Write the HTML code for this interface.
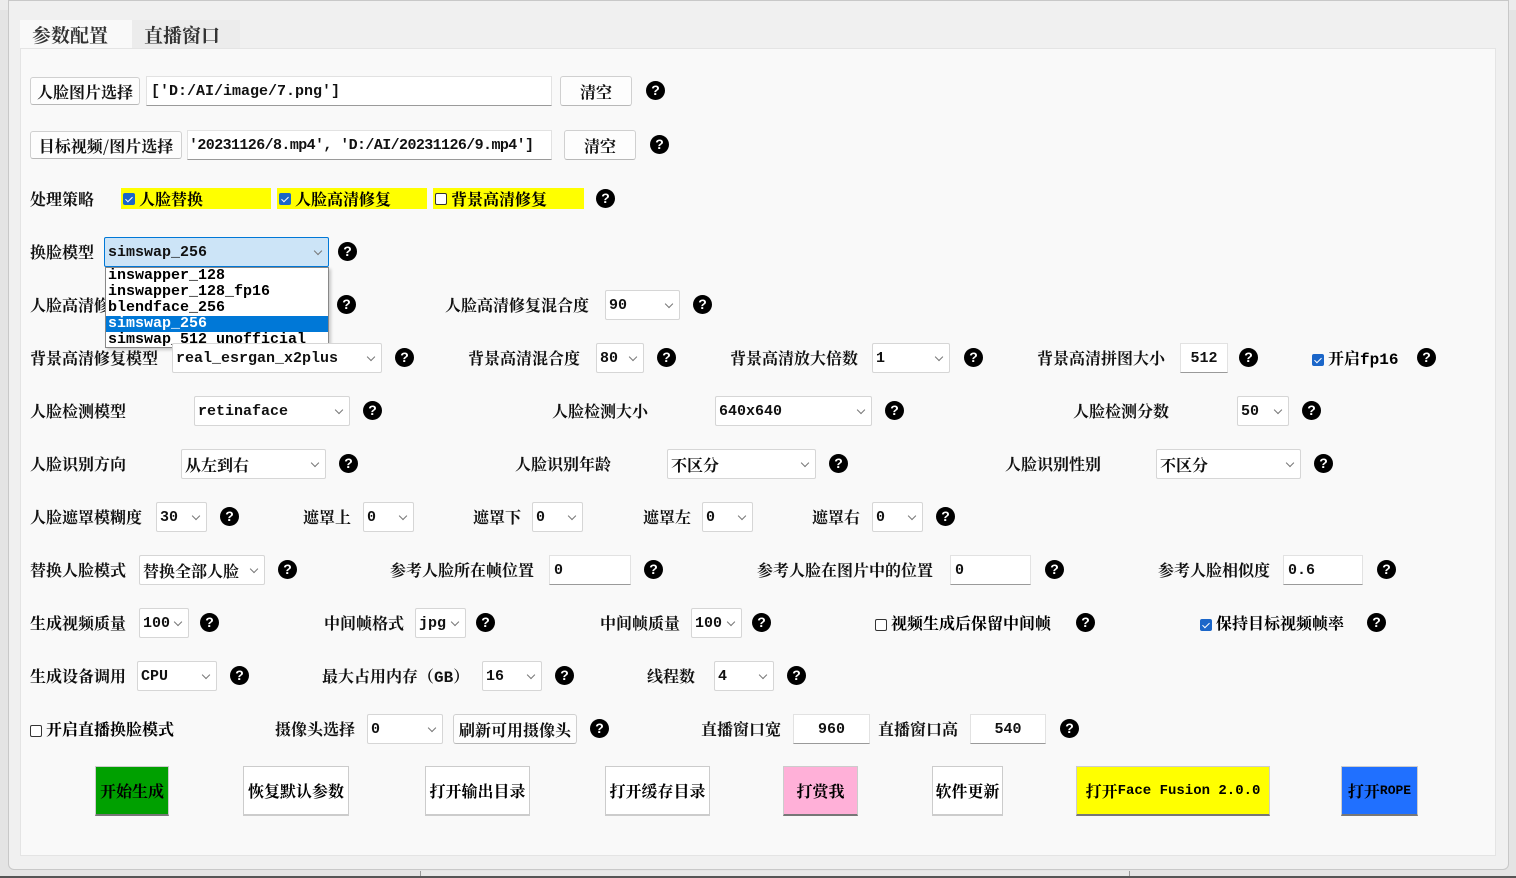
<!DOCTYPE html>
<html><head><meta charset="utf-8"><style>
*{box-sizing:border-box;margin:0;padding:0}
body{width:1516px;height:878px;overflow:hidden;background:#e4e4e4;position:relative;font-family:"Liberation Serif","Noto Serif CJK SC",serif;}
.win{position:absolute;left:8px;top:0;width:1501px;height:870px;background:#f0f0f0;border:1px solid #c8c8c8;border-radius:0 0 6px 6px}
.panel{position:absolute;left:20px;top:48px;width:1476px;height:808px;background:#f9f9f9;border:1px solid #e4e4e4}
.tab{position:absolute;top:20px;height:29px;font:700 19px "Noto Serif CJK SC",serif;padding:0 12px;line-height:29px;color:#333}
.a{position:absolute;white-space:nowrap}
.l{position:absolute;font:700 16px "Noto Serif CJK SC",serif;color:#111;white-space:nowrap;line-height:20px}
.b{position:absolute;background:#fdfdfd;border:1px solid #d0d0d0;border-bottom-color:#b8b8b8;border-radius:3px;font:700 16px "Noto Serif CJK SC",serif;color:#111;display:flex;align-items:center;justify-content:center;white-space:nowrap}
.t{position:absolute;background:#fff;border:1px solid #e2e2e2;border-bottom:1px solid #9a9a9a;font:bold 15px "Liberation Mono","Noto Serif CJK SC",monospace;color:#111;display:flex;align-items:center;padding-left:4px;white-space:nowrap;overflow:hidden}
.c{position:absolute;background:#fff;border:1px solid #d6d6d6;border-radius:2px;font:bold 15px "Liberation Mono","Noto Serif CJK SC",monospace;color:#111;display:flex;align-items:center;padding-left:3px;white-space:nowrap;height:30px}
.c::after{content:"";position:absolute;right:7px;top:10px;width:5px;height:5px;border-right:1px solid #777;border-bottom:1px solid #777;transform:rotate(45deg)}
.cj{font-family:"Noto Serif CJK SC",serif;font-weight:700;font-size:16px}
.q{position:absolute;width:19px;height:19px;border-radius:50%;background:#000;color:#fff;font:bold 14px "Liberation Sans",sans-serif;text-align:center;line-height:19px}
.y{position:absolute;background:#ffff00;height:21px;top:188px;font:700 16px "Noto Serif CJK SC",serif;display:flex;align-items:center;padding-left:2px}
.k{display:inline-block;width:12px;height:12px;border-radius:2px;margin-right:4px;vertical-align:middle;position:relative}
.k.on{background:#1b66c9}
.k.on::after{content:"";position:absolute;left:4px;top:2px;width:3px;height:6px;border-right:1.5px solid #fff;border-bottom:1.5px solid #fff;transform:rotate(45deg)}
.k.off{border:1px solid #333;background:#fff}
.cb{position:absolute;font:700 16px "Noto Serif CJK SC",serif;white-space:nowrap;line-height:20px}
.big{position:absolute;top:766px;height:50px;font:700 16px "Noto Serif CJK SC",serif;display:flex;align-items:center;justify-content:center;border:1px solid #ccc;border-bottom:2px solid #777;white-space:nowrap}
.mono{font-family:"Liberation Mono",monospace}
</style></head><body>
<div style="position:absolute;left:0;top:0;width:1516px;height:10px;background:#ececec"></div>
<div style="position:absolute;left:16px;top:0;width:16px;height:3px;background:#d33"></div>
<div class="win"></div>
<div class="tab" style="left:20px;width:112px;background:#f9f9f9">参数配置</div>
<div class="tab" style="left:132px;width:108px;background:#ececec">直播窗口</div>
<div class="panel"></div>

<div class="b" style="left:30px;top:77px;width:110px;height:28px">人脸图片选择</div>
<div class="t" style="left:146px;top:76px;width:406px;height:30px">['D:/AI/image/7.png']</div>
<div class="b" style="left:560px;top:76px;width:72px;height:30px">清空</div>
<div class="q" style="left:646px;top:81px">?</div>

<div class="b" style="left:30px;top:131px;width:152px;height:28px">目标视频/图片选择</div>
<div class="t" style="left:187px;top:130px;width:365px;height:30px;padding-left:1px;letter-spacing:-0.6px">'20231126/8.mp4', 'D:/AI/20231126/9.mp4']</div>
<div class="b" style="left:564px;top:130px;width:72px;height:30px">清空</div>
<div class="q" style="left:650px;top:135px">?</div>

<div class="l" style="left:30px;top:189px">处理策略</div>
<div class="y" style="left:121px;width:150px"><span class="k on"></span>人脸替换</div>
<div class="y" style="left:277px;width:150px"><span class="k on"></span>人脸高清修复</div>
<div class="y" style="left:433px;width:151px"><span class="k off"></span>背景高清修复</div>
<div class="q" style="left:596px;top:189px">?</div>

<div class="l" style="left:30px;top:242px">换脸模型</div>
<div class="c" style="left:104px;top:237px;width:225px;background:#cce4f7;border-color:#0078d7">simswap_256</div>
<div class="q" style="left:338px;top:242px">?</div>

<div class="l" style="left:30px;top:295px">人脸高清修</div>
<div class="q" style="left:337px;top:295px">?</div>
<div class="l" style="left:445px;top:295px">人脸高清修复混合度</div>
<div class="c" style="left:605px;top:290px;width:75px">90</div>
<div class="q" style="left:693px;top:295px">?</div>

<div class="a" style="left:105px;top:267px;width:224px;height:81px;background:#fff;border:1px solid #888;font:bold 15px 'Liberation Mono',monospace;line-height:16px;box-shadow:2px 2px 3px rgba(0,0,0,.2);overflow:hidden">
<div style="padding-left:2px">inswapper_128</div><div style="padding-left:2px">inswapper_128_fp16</div><div style="padding-left:2px">blendface_256</div><div style="padding-left:2px;background:#0078d7;color:#fff">simswap_256</div><div style="padding-left:2px">simswap_512_unofficial</div></div>

<div class="l" style="left:30px;top:348px">背景高清修复模型</div>
<div class="c" style="left:172px;top:343px;width:210px">real_esrgan_x2plus</div>
<div class="q" style="left:395px;top:348px">?</div>
<div class="l" style="left:468px;top:348px">背景高清混合度</div>
<div class="c" style="left:596px;top:343px;width:48px">80</div>
<div class="q" style="left:657px;top:348px">?</div>
<div class="l" style="left:730px;top:348px">背景高清放大倍数</div>
<div class="c" style="left:872px;top:343px;width:78px">1</div>
<div class="q" style="left:964px;top:348px">?</div>
<div class="l" style="left:1037px;top:348px">背景高清拼图大小</div>
<div class="t" style="left:1180px;top:343px;width:48px;height:30px;justify-content:center;padding:0">512</div>
<div class="q" style="left:1239px;top:348px">?</div>
<div class="cb" style="left:1312px;top:348px"><span class="k on"></span>开启<span class="mono">fp16</span></div>
<div class="q" style="left:1417px;top:348px">?</div>

<div class="l" style="left:30px;top:401px">人脸检测模型</div>
<div class="c" style="left:194px;top:396px;width:156px">retinaface</div>
<div class="q" style="left:363px;top:401px">?</div>
<div class="l" style="left:552px;top:401px">人脸检测大小</div>
<div class="c" style="left:715px;top:396px;width:157px">640x640</div>
<div class="q" style="left:885px;top:401px">?</div>
<div class="l" style="left:1073px;top:401px">人脸检测分数</div>
<div class="c" style="left:1237px;top:396px;width:52px">50</div>
<div class="q" style="left:1302px;top:401px">?</div>

<div class="l" style="left:30px;top:454px">人脸识别方向</div>
<div class="c cj" style="left:181px;top:449px;width:145px">从左到右</div>
<div class="q" style="left:339px;top:454px">?</div>
<div class="l" style="left:515px;top:454px">人脸识别年龄</div>
<div class="c cj" style="left:667px;top:449px;width:149px">不区分</div>
<div class="q" style="left:829px;top:454px">?</div>
<div class="l" style="left:1005px;top:454px">人脸识别性别</div>
<div class="c cj" style="left:1156px;top:449px;width:145px">不区分</div>
<div class="q" style="left:1314px;top:454px">?</div>

<div class="l" style="left:30px;top:507px">人脸遮罩模糊度</div>
<div class="c" style="left:156px;top:502px;width:51px">30</div>
<div class="q" style="left:220px;top:507px">?</div>
<div class="l" style="left:303px;top:507px">遮罩上</div>
<div class="c" style="left:363px;top:502px;width:51px">0</div>
<div class="l" style="left:473px;top:507px">遮罩下</div>
<div class="c" style="left:532px;top:502px;width:51px">0</div>
<div class="l" style="left:643px;top:507px">遮罩左</div>
<div class="c" style="left:702px;top:502px;width:51px">0</div>
<div class="l" style="left:812px;top:507px">遮罩右</div>
<div class="c" style="left:872px;top:502px;width:51px">0</div>
<div class="q" style="left:936px;top:507px">?</div>

<div class="l" style="left:30px;top:560px">替换人脸模式</div>
<div class="c cj" style="left:139px;top:555px;width:126px">替换全部人脸</div>
<div class="q" style="left:278px;top:560px">?</div>
<div class="l" style="left:390px;top:560px">参考人脸所在帧位置</div>
<div class="t" style="left:549px;top:555px;width:82px;height:30px">0</div>
<div class="q" style="left:644px;top:560px">?</div>
<div class="l" style="left:757px;top:560px">参考人脸在图片中的位置</div>
<div class="t" style="left:950px;top:555px;width:81px;height:30px">0</div>
<div class="q" style="left:1045px;top:560px">?</div>
<div class="l" style="left:1158px;top:560px">参考人脸相似度</div>
<div class="t" style="left:1283px;top:555px;width:80px;height:30px">0.6</div>
<div class="q" style="left:1377px;top:560px">?</div>

<div class="l" style="left:30px;top:613px">生成视频质量</div>
<div class="c" style="left:139px;top:608px;width:50px">100</div>
<div class="q" style="left:200px;top:613px">?</div>
<div class="l" style="left:324px;top:613px">中间帧格式</div>
<div class="c" style="left:415px;top:608px;width:51px">jpg</div>
<div class="q" style="left:476px;top:613px">?</div>
<div class="l" style="left:600px;top:613px">中间帧质量</div>
<div class="c" style="left:691px;top:608px;width:51px">100</div>
<div class="q" style="left:752px;top:613px">?</div>
<div class="cb" style="left:875px;top:613px"><span class="k off"></span>视频生成后保留中间帧</div>
<div class="q" style="left:1076px;top:613px">?</div>
<div class="cb" style="left:1200px;top:613px"><span class="k on"></span>保持目标视频帧率</div>
<div class="q" style="left:1367px;top:613px">?</div>

<div class="l" style="left:30px;top:666px">生成设备调用</div>
<div class="c" style="left:137px;top:661px;width:80px">CPU</div>
<div class="q" style="left:230px;top:666px">?</div>
<div class="l" style="left:322px;top:666px">最大占用内存（<span class="mono">GB</span>）</div>
<div class="c" style="left:482px;top:661px;width:60px">16</div>
<div class="q" style="left:555px;top:666px">?</div>
<div class="l" style="left:647px;top:666px">线程数</div>
<div class="c" style="left:714px;top:661px;width:60px">4</div>
<div class="q" style="left:787px;top:666px">?</div>

<div class="cb" style="left:30px;top:719px"><span class="k off"></span>开启直播换脸模式</div>
<div class="l" style="left:275px;top:719px">摄像头选择</div>
<div class="c" style="left:367px;top:714px;width:76px">0</div>
<div class="b" style="left:453px;top:714px;width:124px;height:30px">刷新可用摄像头</div>
<div class="q" style="left:590px;top:719px">?</div>
<div class="l" style="left:701px;top:719px">直播窗口宽</div>
<div class="t" style="left:793px;top:714px;width:77px;height:30px;justify-content:center;padding:0">960</div>
<div class="l" style="left:878px;top:719px">直播窗口高</div>
<div class="t" style="left:970px;top:714px;width:76px;height:30px;justify-content:center;padding:0">540</div>
<div class="q" style="left:1060px;top:719px">?</div>

<div class="big" style="left:95px;width:74px;background:#00a000">开始生成</div>
<div class="big" style="left:243px;width:106px;background:#fff;border-bottom-color:#ccc">恢复默认参数</div>
<div class="big" style="left:425px;width:105px;background:#fff;border-bottom-color:#ccc">打开输出目录</div>
<div class="big" style="left:605px;width:105px;background:#fff;border-bottom-color:#ccc">打开缓存目录</div>
<div class="big" style="left:783px;width:75px;background:#ffb0d8">打赏我</div>
<div class="big" style="left:932px;width:71px;background:#fff;border-bottom-color:#ccc">软件更新</div>
<div class="big" style="left:1076px;width:194px;background:#ffff00">打开<span class="mono" style="font-size:14px">Face Fusion 2.0.0</span></div>
<div class="big" style="left:1341px;width:77px;background:#2070ff">打开<span class="mono" style="font-size:13px">ROPE</span></div>

<div style="position:absolute;left:420px;top:871px;width:710px;height:7px;border-left:1px solid #999;border-right:1px solid #999;background:#e8e8e8"></div>
<div style="position:absolute;left:0;top:876px;width:1516px;height:2px;background:#555"></div>
</body></html>
